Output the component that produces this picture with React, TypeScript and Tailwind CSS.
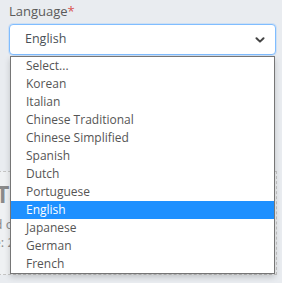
const options = [
  'Select...',
  'Korean',
  'Italian',
  'Chinese Traditional',
  'Chinese Simplified',
  'Spanish',
  'Dutch',
  'Portuguese',
  'English',
  'Japanese',
  'German',
  'French',
]

function Chevron() {
  return (
    <svg viewBox="0 0 10 6" className="h-[6px] w-[10px] text-[#444]" fill="none" stroke="currentColor" strokeWidth="2" strokeLinecap="round" strokeLinejoin="round">
      <path d="M1.5 1.2 5 4.6 8.5 1.2" />
    </svg>
  )
}

export default function App() {
  const selected = 'English'
  return (
    <div className="relative h-[283px] w-[282px] overflow-hidden bg-[#e9ecf0] font-['Open_Sans',sans-serif]">
      <div className="px-[9px] pt-[1px]">
        <div className="h-[23px] text-[13px] leading-[20px] text-[#5a5a5a]">
          Language<span className="text-[#d9534f]">*</span>
        </div>
        <div className="flex h-[31px] w-[267px] items-center justify-between rounded-[4px] border border-[#80bdff] bg-white pl-[15px] pr-[10px] shadow-[0_0_0_1px_rgba(128,189,255,0.25)]">
          <span className="text-[12.5px] text-[#495057]">English</span>
          <Chevron />
        </div>
      </div>

      {/* card behind the open list */}
      <div className="-ml-[12px] mt-[116px] h-[104px] w-[289px] border border-dashed border-[#c4c4c4] bg-[#eff1f3]">
        <div className="ml-[7px] pt-[9px] text-[23px] font-bold leading-[26px] text-[#8a8a8a]">Tasks</div>
        <div className="ml-[-26px] mt-[8px] whitespace-nowrap text-[13px] leading-[18px] text-[#8a8a8a]">Added on</div>
        <div className="ml-[-13px] whitespace-nowrap text-[13px] leading-[18px] text-[#8a8a8a]">Due: 2024</div>
      </div>

      <ul className="absolute left-[10px] top-[56px] w-[265px] border border-[#767676] bg-white shadow-[0_3px_6px_rgba(0,0,0,0.18)]">
        {options.map((o) => (
          <li
            key={o}
            className={
              o === selected
                ? 'h-[18px] bg-[#1e90ff] pl-[15px] text-[12px] leading-[18px] text-white'
                : 'h-[18px] pl-[15px] text-[12px] leading-[18px] text-[#555]'
            }
          >
            {o}
          </li>
        ))}
      </ul>
    </div>
  )
}
